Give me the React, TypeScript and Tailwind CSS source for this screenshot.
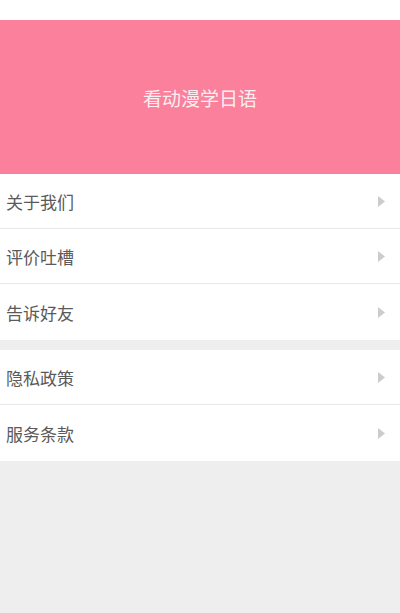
import React from "react";

const font = { fontFamily: '"Noto Sans CJK SC", "Noto Sans", sans-serif' };

function Arrow() {
  return (
    <svg width="7" height="11" viewBox="0 0 7 11" className="shrink-0">
      <path d="M0 0 L7 5.5 L0 11 Z" fill="#cccccc" />
    </svg>
  );
}

function Row({ label, last }: { label: string; last?: boolean }) {
  return (
    <div className={`flex items-center justify-between pl-[6px] pr-[15px] bg-white ${last ? "h-[56px]" : "h-[55px] border-b border-[#e8e8e8]"}`}>
      <span className="text-[17px] text-[#5a5a5a] leading-none">{label}</span>
      <Arrow />
    </div>
  );
}

export default function App() {
  return (
    <div className="w-[400px] h-[613px] bg-[#eeeeee] flex flex-col" style={font}>
      <div className="h-[20px] bg-white" />
      <div className="h-[154px] bg-[#fa809c] flex items-center justify-center">
        <span className="text-[19px] text-[#fbeef1] leading-none">看动漫学日语</span>
      </div>
      <div className="flex flex-col">
        <Row label="关于我们" />
        <Row label="评价吐槽" />
        <Row label="告诉好友" last />
      </div>
      <div className="h-[10px]" />
      <div className="flex flex-col">
        <Row label="隐私政策" />
        <Row label="服务条款" last />
      </div>
    </div>
  );
}
